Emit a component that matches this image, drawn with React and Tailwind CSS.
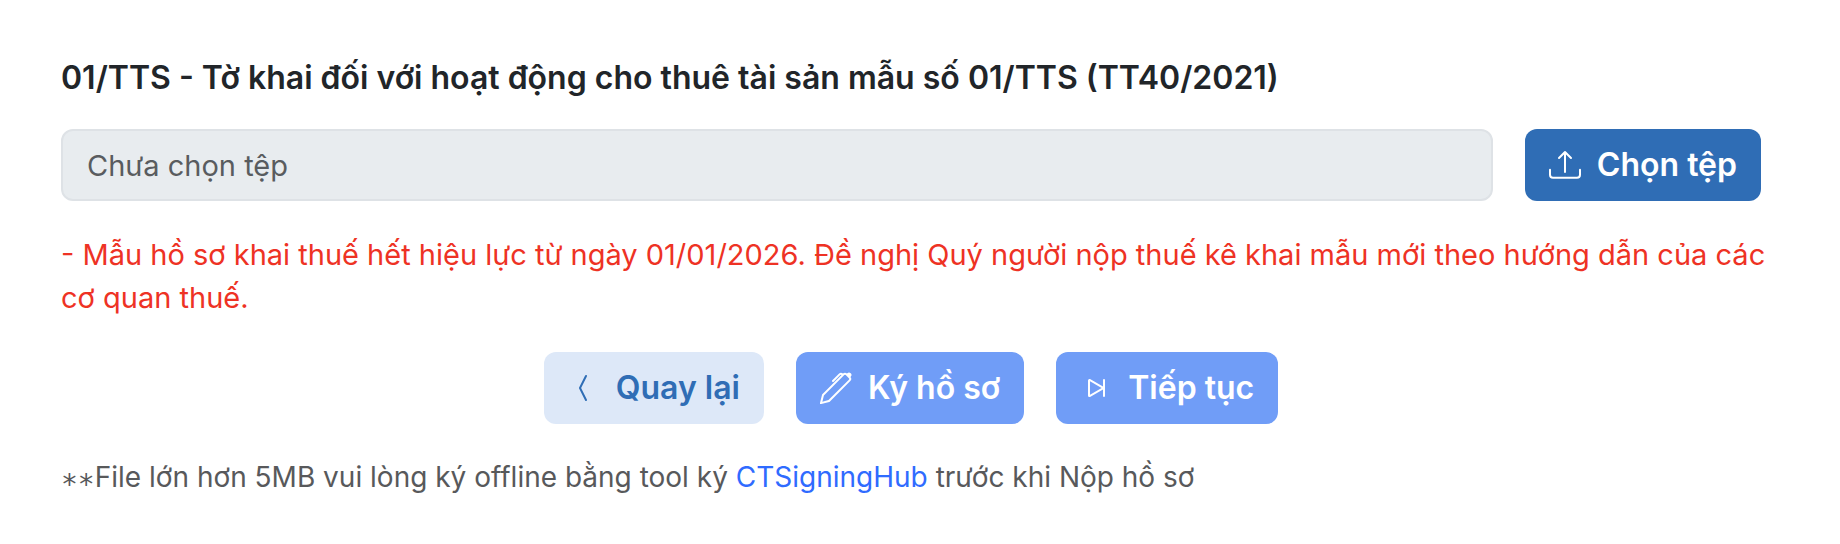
import { useRef, useState } from "react";
import { BsChevronCompactLeft, BsPen, BsSkipEnd, BsUpload } from "react-icons/bs";

const App = () => {
    const [fileName, setFileName] = useState("");
    const fileInput = useRef(null);

    const handleChange = (e) => {
        const file = e.target.files[0];
        setFileName(file ? file.name : "");
    };

    return (
        <main className="bg-white pl-[61px] pr-[79px] py-14 font-['Inter',sans-serif]">
            <h1 className="text-[32px] leading-[43px] font-semibold text-[#212529]">
                01/TTS - Tờ khai đối với hoạt động cho thuê tài sản mẫu số 01/TTS (TT40/2021)
            </h1>

            <div className="mt-[30px] flex gap-8">
                <input
                    type="text"
                    aria-label="Tệp"
                    placeholder="Chưa chọn tệp"
                    value={fileName}
                    readOnly
                    className="h-[72px] min-w-0 flex-1 rounded-xl border-2 border-[#dee2e6] bg-[#e8ecef] px-6 text-[29px] text-[#595c5f] placeholder:text-[#595c5f]"
                />
                <input ref={fileInput} type="file" aria-label="Chọn tệp" onChange={handleChange} className="hidden" />
                <button
                    type="button"
                    onClick={() => fileInput.current.click()}
                    className="flex h-[72px] items-center gap-4 rounded-xl bg-[#2f6db5] px-6 text-[32px] font-semibold text-white"
                >
                    <BsUpload className="size-8" />
                    Chọn tệp
                </button>
            </div>

            <p className="mt-8 -mr-4 text-[29px] leading-[43px] text-[#ee3224]">
                - Mẫu hồ sơ khai thuế hết hiệu lực từ ngày 01/01/2026. Đề nghị Quý người nộp thuế kê khai mẫu mới theo hướng dẫn của các cơ quan thuế.
            </p>

            <div className="mt-[33px] flex justify-center gap-8">
                <button type="button" className="flex h-[72px] items-center gap-4 rounded-xl bg-[#dde8f8] px-6 text-[32px] font-semibold text-[#2f6db5]">
                    <BsChevronCompactLeft className="size-8" />
                    Quay lại
                </button>
                <button type="button" disabled className="flex h-[72px] items-center gap-4 rounded-xl bg-[#709df7] px-6 text-[32px] font-semibold text-white">
                    <BsPen className="size-8" />
                    Ký hồ sơ
                </button>
                <button type="button" disabled className="flex h-[72px] items-center gap-4 rounded-xl bg-[#709df7] px-6 text-[32px] font-semibold text-white">
                    <BsSkipEnd className="size-8" />
                    Tiếp tục
                </button>
            </div>

            <p className="mt-8 text-[28px] leading-[43px] text-[#58595b]">
                <span className="align-sub leading-none font-['DejaVu_Sans_Mono',monospace]">**</span>File lớn hơn 5MB vui lòng ký offline bằng tool ký{" "}
                <a href="#" className="text-[#2f6bff]">CTSigningHub</a> trước khi Nộp hồ sơ
            </p>
        </main>
    );
};

export default App;
